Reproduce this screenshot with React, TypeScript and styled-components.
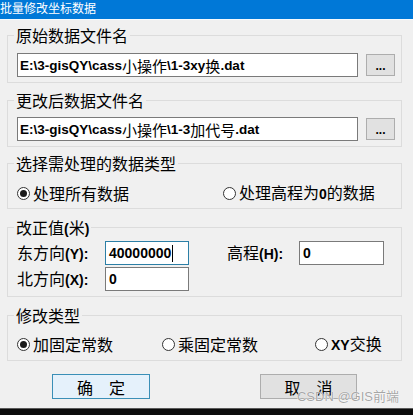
import React from "react";
import styled, { createGlobalStyle } from "styled-components";

const CJK = `"Noto Sans CJK SC", "Noto Sans", sans-serif`;
const LAT = `"Liberation Sans", Arial, "Noto Sans CJK SC", sans-serif`;

const Global = createGlobalStyle`
  html, body { margin: 0; padding: 0; background: #f0f0f0; }
  body { width: 413px; height: 415px; overflow: hidden; font-family: ${CJK}; color: #000; }
  * { box-sizing: border-box; text-autospace: no-autospace; }
`;

const Window = styled.div`
  position: relative;
  width: 413px;
  height: 415px;
  display: flex;
  flex-direction: column;
  background: #f0f0f0;
  overflow: hidden;
`;

const TitleBar = styled.div`
  height: 20px;
  background: #0078d7;
  color: #fff;
  font-size: 12px;
  line-height: 15px;
  white-space: nowrap;
  border-bottom: 1px solid #f6fafd;
`;

const Body = styled.div`
  flex: 1;
  display: flex;
  flex-direction: column;
  padding: 7px 11px 0 7px;
`;

const Group = styled.fieldset<{ $pt: number; $pb: number; $mt: number }>`
  margin: ${(p) => p.$mt}px 0 0 0;
  padding: ${(p) => p.$pt}px 6px ${(p) => p.$pb}px 9px;
  border: 1px solid #dcdcdc;
  min-width: 0;
`;

const Legend = styled.legend`
  padding: 0 2px;
  margin-left: -3px;
  font-size: 16px;
  line-height: 16px;
  height: 16px;
`;

const Lt = styled.span<{ $size?: number }>`
  font-family: ${LAT};
  font-weight: 700;
  font-size: ${(p) => p.$size ?? 14}px;
`;

const Cj = styled.span<{ $size?: number }>`
  font-family: ${CJK};
  font-size: ${(p) => p.$size ?? 16}px;
`;

const FileRow = styled.div`
  display: flex;
  align-items: center;
  gap: 8px;
`;

const PathBox = styled.div`
  flex: 1;
  height: 24px;
  background: #fff;
  border: 1px solid #7a7a7a;
  display: flex;
  align-items: center;
  padding-left: 2px;
  white-space: nowrap;
  overflow: hidden;
`;

const Browse = styled.div`
  width: 29px;
  height: 22px;
  background: #e1e1e1;
  border: 1px solid #adadad;
  display: flex;
  align-items: center;
  justify-content: center;
  font-family: ${LAT};
  font-weight: 700;
  font-size: 12px;
  padding-top: 2px;
`;

const RadioGrid = styled.div<{ $cols: string }>`
  display: grid;
  grid-template-columns: ${(p) => p.$cols};
  align-items: center;
  height: 20px;
`;

const RadioItem = styled.label`
  display: flex;
  align-items: center;
  gap: 3px;
  font-size: 16px;
  line-height: 20px;
  white-space: nowrap;
`;

const RadioText = styled.span`
  white-space: nowrap;
`;

const RadioDot = styled.span<{ $on?: boolean }>`
  width: 13px;
  height: 13px;
  border-radius: 50%;
  border: 1px solid #333;
  background: #fff;
  display: flex;
  align-items: center;
  justify-content: center;
  flex: none;
  &::after {
    content: "";
    width: 7px;
    height: 7px;
    border-radius: 50%;
    background: ${(p) => (p.$on ? "#1a1a1a" : "transparent")};
  }
`;

const ValueGrid = styled.div`
  display: grid;
  grid-template-columns: 88px 84px 38px 72px 85px;
  grid-auto-rows: 24px;
  row-gap: 2px;
  align-items: center;
`;

const FieldLabel = styled.div`
  font-size: 16px;
  line-height: 20px;
  white-space: nowrap;
`;

const Field = styled.div<{ $focus?: boolean }>`
  height: 24px;
  background: #fff;
  border: 1px solid ${(p) => (p.$focus ? "#2c7fa6" : "#7a7a7a")};
  display: flex;
  align-items: center;
  padding-left: 3px;
  font-family: ${LAT};
  font-weight: 700;
  font-size: 14px;
`;

const Caret = styled.span`
  display: inline-block;
  width: 1px;
  height: 17px;
  background: #000;
  margin-left: 1px;
`;

const ButtonRow = styled.div`
  display: flex;
  gap: 110px;
  padding-left: 45px;
  margin-top: 13px;
`;

const DlgButton = styled.div<{ $primary?: boolean; $w: number }>`
  width: ${(p) => p.$w}px;
  height: 25px;
  background: ${(p) => (p.$primary ? "#e5f1fb" : "#e1e1e1")};
  border: 1px solid ${(p) => (p.$primary ? "#3a8fb7" : "#adadad")};
  display: flex;
  align-items: center;
  justify-content: center;
  font-size: 16px;
  line-height: 20px;
  white-space: pre;
`;

const BottomBar = styled.div`
  margin-top: auto;
  height: 7px;
  border-top: 1px solid #5a5a5a;
  background: #0c0c0c;
`;

const Watermark = styled.div`
  position: absolute;
  right: 14px;
  bottom: 10px;
  font-family: ${LAT};
  font-size: 13px;
  color: rgba(150, 150, 150, 0.85);
  text-shadow: 0 0 1px #fff, 0 0 1px #fff;
  white-space: nowrap;
`;

export default function App() {
  return (
    <Window>
      <Global />
      <TitleBar>批量修改坐标数据</TitleBar>
      <Body>
        <Group $mt={0} $pt={10} $pb={5}>
          <Legend>原始数据文件名</Legend>
          <FileRow>
            <PathBox>
              <Lt $size={13.5}>E:\3-gisQY\cass</Lt>
              <Cj $size={15}>小操作</Cj>
              <Lt $size={13.5}>\1-3xy</Lt>
              <Cj $size={15}>换</Cj>
              <Lt $size={13.5}>.dat</Lt>
            </PathBox>
            <Browse>...</Browse>
          </FileRow>
        </Group>

        <Group $mt={9} $pt={9} $pb={5}>
          <Legend>更改后数据文件名</Legend>
          <FileRow>
            <PathBox>
              <Lt $size={13.5}>E:\3-gisQY\cass</Lt>
              <Cj $size={15}>小操作</Cj>
              <Lt $size={13.5}>\1-3</Lt>
              <Cj $size={15}>加代号</Cj>
              <Lt $size={13.5}>.dat</Lt>
            </PathBox>
            <Browse>...</Browse>
          </FileRow>
        </Group>

        <Group $mt={8} $pt={11} $pb={6}>
          <Legend>选择需处理的数据类型</Legend>
          <RadioGrid $cols="206px 1fr">
            <RadioItem>
              <RadioDot $on />
              <RadioText>处理所有数据</RadioText>
            </RadioItem>
            <RadioItem>
              <RadioDot />
              <RadioText>
                处理高程为<Lt>0</Lt>的数据
              </RadioText>
            </RadioItem>
          </RadioGrid>
        </Group>

        <Group $mt={10} $pt={6} $pb={5}>
          <Legend>
            改正值<Lt>(</Lt>米<Lt>)</Lt>
          </Legend>
          <ValueGrid>
            <FieldLabel>
              东方向<Lt>(Y):</Lt>
            </FieldLabel>
            <Field $focus>
              40000000
              <Caret />
            </Field>
            <span />
            <FieldLabel>
              高程<Lt>(H):</Lt>
            </FieldLabel>
            <Field>0</Field>
            <FieldLabel>
              北方向<Lt>(X):</Lt>
            </FieldLabel>
            <Field>0</Field>
          </ValueGrid>
        </Group>

        <Group $mt={10} $pt={10} $pb={7}>
          <Legend>修改类型</Legend>
          <RadioGrid $cols="145px 153px 1fr">
            <RadioItem>
              <RadioDot $on />
              <RadioText>加固定常数</RadioText>
            </RadioItem>
            <RadioItem>
              <RadioDot />
              <RadioText>乘固定常数</RadioText>
            </RadioItem>
            <RadioItem>
              <RadioDot />
              <RadioText>
                <Lt>XY</Lt>交换
              </RadioText>
            </RadioItem>
          </RadioGrid>
        </Group>

        <ButtonRow>
          <DlgButton $primary $w={98}>确　定</DlgButton>
          <DlgButton $w={97}>取　消</DlgButton>
        </ButtonRow>
      </Body>
      <BottomBar />
      <Watermark>CSDN @GIS前端</Watermark>
    </Window>
  );
}
